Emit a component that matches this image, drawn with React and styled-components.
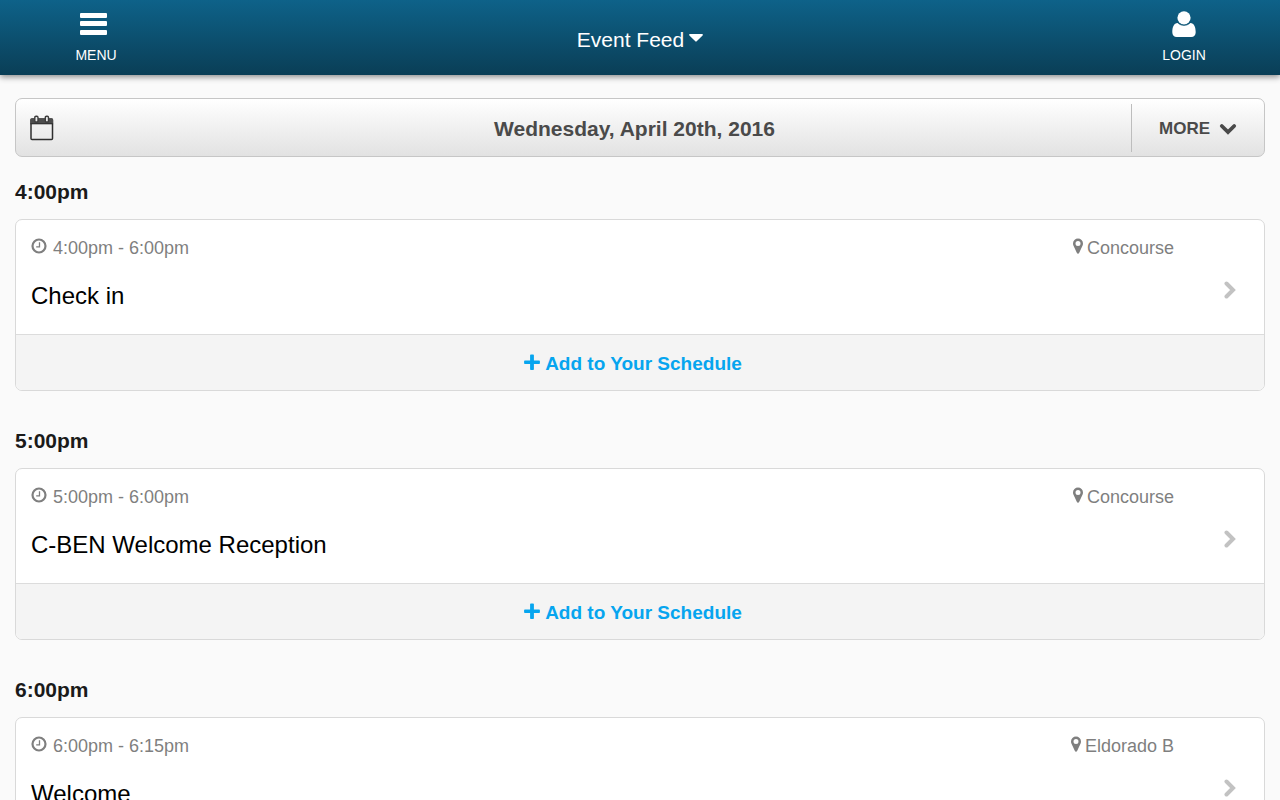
import React from 'react';
import styled, { createGlobalStyle } from 'styled-components';

const events = [
  { id: 1, heading: '4:00pm', time: '4:00pm - 6:00pm', place: 'Concourse', title: 'Check in' },
  { id: 2, heading: '5:00pm', time: '5:00pm - 6:00pm', place: 'Concourse', title: 'C-BEN Welcome Reception' },
  { id: 3, heading: '6:00pm', time: '6:00pm - 6:15pm', place: 'Eldorado B', title: 'Welcome' },
];

// Styled Components -->

const GlobalStyle = createGlobalStyle`
  * {
    box-sizing: border-box;
  }

  body {
    margin: 0;
    overflow-x: hidden;
    background-color: #fafafa;
    color: #000;
    font-family: "Liberation Sans", Arial, sans-serif;
  }

  button {
    margin: 0;
    padding: 0;
    border: 0;
    background: none;
    font-family: inherit;
    cursor: pointer;
  }

  svg {
    display: block;
    flex: none;
  }
`;

const Header = styled.header`
  display: grid;
  grid-template-columns: 15% 1fr 15%;
  height: 75px;
  background: linear-gradient(#0e6289, #0a3e56);
  box-shadow: 0 2px 6px rgba(0, 0, 0, 0.45);
`;

const NavButton = styled.button`
  display: flex;
  flex-direction: column;
  align-items: center;
  gap: 9px;
  padding-top: 11px;
  color: #fff;
  font-size: 14px;
  line-height: 18px;
  text-transform: uppercase;
`;

const FeedButton = styled.button`
  display: flex;
  justify-content: center;
  align-items: center;
  gap: 5px;
  padding-top: 4px;
  color: #fff;
  font-size: 21px;
  line-height: 24px;
`;

const Main = styled.main`
  padding: 23px 15px;
`;

const Toolbar = styled.div`
  display: flex;
  align-items: center;
  height: 59px;
  padding-left: 14px;
  border: 1px solid #c6c6c6;
  border-radius: 7px;
  background: linear-gradient(#fff, #e2e2e2);
  color: #4a4a4a;
`;

const DateTitle = styled.h1`
  flex: 1;
  margin: 0;
  padding: 2px 0 0 84px;
  font-size: 21px;
  line-height: 24px;
  text-align: center;
`;

const MoreButton = styled.button`
  display: flex;
  justify-content: center;
  align-items: center;
  gap: 9px;
  width: 133px;
  height: 48px;
  padding-top: 2px;
  border-left: 1px solid #bdbdbd;
  color: #4a4a4a;
  font-size: 17px;
  font-weight: bold;
  text-transform: uppercase;
`;

const Slot = styled.section`
  margin-bottom: 38px;
`;

const SlotTitle = styled.h2`
  margin: 0;
  padding: 23px 0 15px;
  color: #1a1a1a;
  font-size: 21px;
  line-height: 24px;

  ${Slot} + ${Slot} & {
    padding-top: 0;
  }
`;

const Card = styled.article`
  overflow: hidden;
  border: 1px solid #d9d9d9;
  border-radius: 7px;
  background-color: #fff;
`;

const CardLink = styled.a`
  display: flex;
  align-items: center;
  height: 114px;
  padding: 26px 28px 0 15px;
  color: #000;
  text-decoration: none;
`;

const Details = styled.div`
  flex: 1;
  align-self: flex-start;
  margin-top: -10px;
  padding-right: 50px;
`;

const Meta = styled.div`
  display: flex;
  justify-content: space-between;
  color: #7f7f7f;
  font-size: 18px;
  line-height: 24px;
`;

const MetaItem = styled.span`
  display: flex;
  gap: ${props => props.$gap};
`;

const Title = styled.h3`
  margin: 0;
  padding-top: 22px;
  font-size: 24px;
  font-weight: normal;
  line-height: 28px;
`;

const AddButton = styled.button`
  display: flex;
  justify-content: center;
  gap: 5px;
  width: 100%;
  height: 56px;
  padding: 17px 14px 0 0;
  border-top: 1px solid #dcdcdc;
  background-color: #f4f4f4;
  color: #06a5ef;
  font-size: 19px;
  font-weight: bold;
  line-height: 24px;
`;

// Icons -->

const BarsIcon = () => (
  <svg width="32" height="26" viewBox="0 0 32 26" fill="currentColor" aria-hidden="true">
    <rect x="0" y="2" width="27" height="5" rx="1" />
    <rect x="0" y="10" width="27" height="5" rx="1" />
    <rect x="0" y="19" width="27" height="5" rx="1" />
  </svg>
);

const UserIcon = () => (
  <svg width="24" height="26" viewBox="0 0 24 26" fill="currentColor" aria-hidden="true">
    <path d="M5.600 12C2 12 .3 16 .3 21.300c0 3 1.800 4.700 4.400 4.700h14.600c2.600 0 4.400-1.700 4.400-4.700C23.700 16 22 12 18.400 12c-1.800 1.500-4 2.200-6.400 2.200S7.400 13.500 5.600 12z" />
    <circle cx="12" cy="6.800" r="6.600" />
    <path d="M5.800 11.300a7.600 7.600 0 0 0 12.400 0" fill="none" stroke="#0d5574" strokeWidth=".700" />
  </svg>
);

const CaretIcon = () => (
  <svg width="14" height="12" viewBox="0 0 14 12" fill="currentColor" aria-hidden="true">
    <path d="M1 0h12c.9 0 1.200.8.600 1.400L7.700 7.300a1 1 0 0 1-1.400 0L.4 1.400C-.2.8.1 0 1 0z" />
  </svg>
);

const CalendarIcon = () => (
  <svg width="24" height="26" viewBox="0 0 24 26" aria-hidden="true">
    <rect x="1" y="4" width="21.500" height="20.500" rx="1" fill="none" stroke="#2f2f2f" strokeWidth="1.500" />
    <path d="M.4 4.500q0-1 1-1H22q1 0 1 1V9H.4z" fill="#4d4d4d" />
    <path d="M.5 8.800h22.600" stroke="#2b2b2b" strokeWidth="1" />
    <rect x="4.800" y="1.200" width="3.200" height="5.800" rx="1.200" fill="#e8e8e8" stroke="#3c3c3c" strokeWidth="1.400" />
    <rect x="15.300" y="1.200" width="3.200" height="5.800" rx="1.200" fill="#e8e8e8" stroke="#3c3c3c" strokeWidth="1.400" />
  </svg>
);

const ChevronDownIcon = () => (
  <svg width="18" height="12" viewBox="0 0 18 12" aria-hidden="true">
    <path d="M2.800 3 9 9l6.200-6" fill="none" stroke="currentColor" strokeWidth="3.800" strokeLinecap="round" />
  </svg>
);

const ChevronRightIcon = () => (
  <svg width="12" height="18" viewBox="0 0 12 18" aria-hidden="true">
    <path d="M2.500 2.500 9 9l-6.500 6.500" fill="none" stroke="#c2c2c2" strokeWidth="4" strokeLinecap="round" />
  </svg>
);

const ClockIcon = () => (
  <svg width="16" height="20" viewBox="0 0 16 20" fill="none" stroke="currentColor" aria-hidden="true">
    <circle cx="8" cy="10" r="6.500" strokeWidth="2.200" />
    <path d="M8.500 6.200v4.600H5.200" strokeWidth="1.300" />
  </svg>
);

const PinIcon = () => (
  <svg width="10" height="20" viewBox="0 0 10 20" fill="currentColor" fillRule="evenodd" aria-hidden="true">
    <path d="M5 2.500a5 5 0 0 0-5 5c0 .8.100 1.400.4 2l3.500 7.500c.4.900 1.800.9 2.200 0l3.500-7.500c.3-.6.400-1.200.4-2a5 5 0 0 0-5-5zm0 2.500a2.500 2.500 0 1 1 0 5 2.500 2.500 0 0 1 0-5z" />
  </svg>
);

const PlusIcon = () => (
  <svg width="16" height="20" viewBox="0 0 16 20" fill="currentColor" aria-hidden="true">
    <path d="M6.100 3.300q0-.8.800-.8h2.200q.8 0 .8.800v5.200h5.200q.8 0 .8.800v1.900q0 .8-.8.800H9.900v5.200q0 .8-.8.800H6.900q-.8 0-.8-.8V12H.9q-.8 0-.8-.8V9.300q0-.8.800-.8h5.200z" />
  </svg>
);

// App Component -->

const EventCard = props => {
  return (
    <Slot>
      <SlotTitle>{props.event.heading}</SlotTitle>
      <Card>
        <CardLink href={`#event-${props.event.id}`}>
          <Details>
            <Meta>
              <MetaItem $gap="6px"><ClockIcon />{props.event.time}</MetaItem>
              <MetaItem $gap="4px"><PinIcon />{props.event.place}</MetaItem>
            </Meta>
            <Title>{props.event.title}</Title>
          </Details>
          <ChevronRightIcon />
        </CardLink>
        <AddButton type="button"><PlusIcon />Add to Your Schedule</AddButton>
      </Card>
    </Slot>
  );
};

const App = () => {
  return (
    <React.Fragment>
      <GlobalStyle />
      <Header>
        <NavButton type="button"><BarsIcon />Menu</NavButton>
        <FeedButton type="button">Event Feed<CaretIcon /></FeedButton>
        <NavButton type="button"><UserIcon />Login</NavButton>
      </Header>
      <Main>
        <Toolbar>
          <CalendarIcon />
          <DateTitle>Wednesday, April 20th, 2016</DateTitle>
          <MoreButton type="button">More<ChevronDownIcon /></MoreButton>
        </Toolbar>
        {events.map(event => (
          <EventCard key={event.id} event={event} />
        ))}
      </Main>
    </React.Fragment>
  );
};

export default App;
